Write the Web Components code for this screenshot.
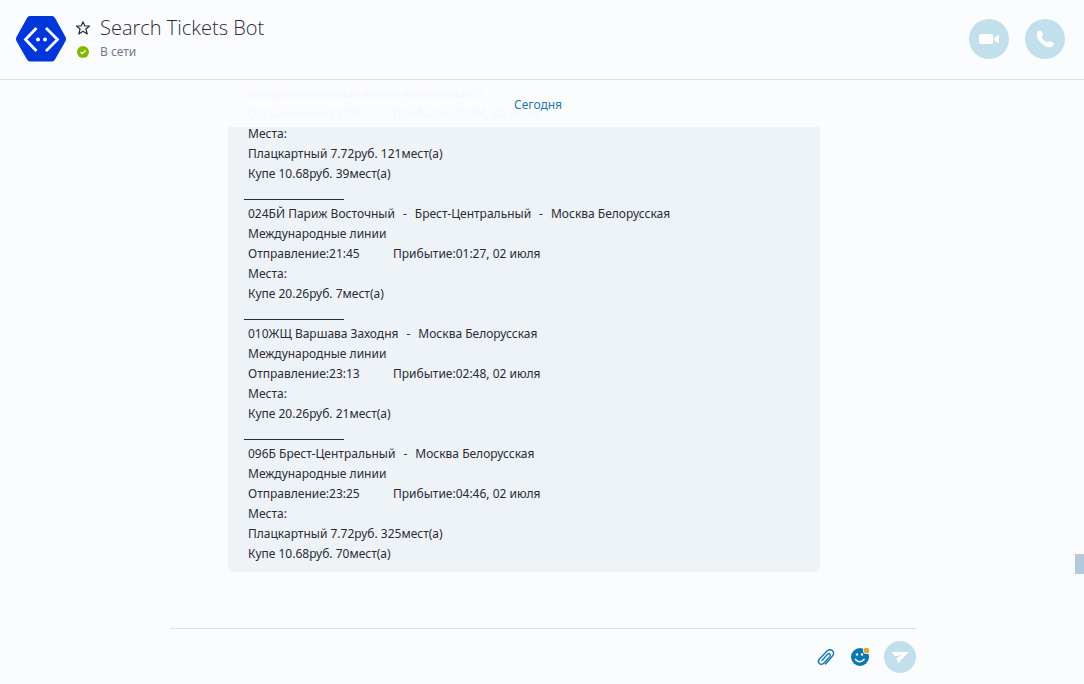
<!DOCTYPE html>
<html lang="ru">
<head>
<meta charset="utf-8">
<meta name="viewport" content="width=device-width, initial-scale=1">
<title>Search Tickets Bot</title>
<style>
  body { margin: 0; background: #fbfcfe; color: #2b2c33; font: 12px/20px "Noto Sans", "Open Sans", sans-serif; }
</style>
</head>
<body>
<chat-app></chat-app>
<script>
const define = (name, html) => {
  const template = document.createElement('template');
  template.innerHTML = html;
  customElements.define(name, class extends HTMLElement {
    constructor() {
      super();
      this.attachShadow({ mode: 'open' }).append(template.content.cloneNode(true));
    }
  });
};

class RoundButton extends HTMLElement {
  connectedCallback() {
    this.attachShadow({ mode: 'open' }).innerHTML = `
      <style>
        :host { display: block; }
        button { display: grid; place-items: center; width: var(--size, 40px); height: var(--size, 40px);
          padding: 0; border: 0; border-radius: 50%; background: var(--fill, #c2dfec); color: #fff; }
      </style>
      <button type="button" aria-label="${this.getAttribute('label')}"><slot></slot></button>`;
  }
}
customElements.define('round-button', RoundButton);

define('chat-header', `
  <style>
    :host { display: flex; align-items: flex-start; gap: 7px; height: 64px; padding: 15px 19px 0 15px;
      border-bottom: 1px solid #dfe2e6; }
    svg { display: block; }
    .info { display: grid; grid-template-columns: 18px 1fr; gap: 1px 8px; flex: 1; align-items: center; }
    .info > svg { justify-self: center; }
    h1 { margin: 0; font: 300 20px/26px "Open Sans", "Noto Sans", sans-serif; color: #2b2c33; }
    p { margin: 0; line-height: 20px; color: #737a88; }
    .calls { display: flex; gap: 16px; padding-top: 4px; }
  </style>
  <svg width="52" height="48" viewBox="0 0 52 48" aria-hidden="true">
    <path d="M15 1H37Q39 1 40 3L50 21Q52 24 50 27L40 44.500Q39 46.500 37 46.500H15Q13 46.500 12 44.500L2 27Q0 24 2 21L12 3Q13 1 15 1Z" fill="#0037da"/>
    <path d="M21.500 13L10.500 24.500L21.500 36M31 13L42.500 24.500L31 36" fill="none" stroke="#fff" stroke-width="2.800"/>
    <circle cx="23" cy="24.500" r="2" fill="#fff"/><circle cx="30" cy="24.500" r="2" fill="#fff"/>
  </svg>
  <div class="info">
    <svg width="16" height="16" viewBox="0 0 16 16" aria-hidden="true"><path d="M8 1.800L9.800 6H14.500L10.900 9L12.200 13.900L8 11.200L3.800 13.900L5.100 9L1.500 6H6.200Z" fill="none" stroke="#2b2c33" stroke-width="1.200" stroke-linejoin="round"/></svg>
    <h1>Search Tickets Bot</h1>
    <svg width="12" height="12" viewBox="0 0 12 12" aria-hidden="true"><circle cx="6" cy="6" r="6" fill="#7fba00"/><path d="M3.500 6L5.300 7.700L8.600 4.500" fill="none" stroke="#fff" stroke-width="1.300"/></svg>
    <p>В сети</p>
  </div>
  <div class="calls">
    <round-button label="Видеозвонок"><svg width="22" height="14" viewBox="0 0 22 14"><rect x="1" y="2" width="14" height="10" rx="2" fill="#fff"/><path d="M16 6L20 3Q21 3 21 4V10Q21 11 20 11L16 8Z" fill="#fff"/></svg></round-button>
    <round-button label="Звонок"><svg width="20" height="20" viewBox="0 0 20 20"><path d="M3 2Q5.500 .5 7 3Q8.500 6 6.500 8Q8 11.500 12 13.500Q14 11.500 17 13Q20 14.500 18 17Q15 19.500 10 17Q1 11.500 2 4Q2 3 3 2Z" fill="#fff"/></svg></round-button>
  </div>
`);

define('chat-message', `
  <style>
    :host { display: flow-root; padding: 0 20px 8px; border-radius: 0 0 6px 6px; background: #eef3f8; }
    slot { display: block; margin-top: -3px; }
  </style>
  <slot></slot>
`);

class TrainEntry extends HTMLElement {
  connectedCallback() {
    const attr = name => this.getAttribute(name);
    const route = attr('route') ? `<div class="route">${attr('route').split('|').map(s => `<span>${s}</span>`).join('<span>-</span>')}</div>
      <div>Международные линии</div>
      <div class="times"><span>Отправление:${attr('dep')}</span><span>Прибытие:${attr('arr')}, 02 июля</span></div>` : '';
    this.attachShadow({ mode: 'open' }).innerHTML = `
      <style>
        :host { display: block; }
        div { min-height: 20px; }
        .route { display: flex; flex-wrap: wrap; column-gap: 8px; }
        .times { display: grid; grid-template-columns: 145px 1fr; }
        :host(:not(:last-child))::after { content: ""; display: block; width: 100px; height: 15px; margin: 0 0 4px -4px; border-bottom: 1px solid #2b2c33; }
      </style>${route}<div>Места:</div>${attr('seats').split('|').map(s => `<div>${s}</div>`).join('')}`;
  }
}
customElements.define('train-entry', TrainEntry);

define('chat-log', `
  <style>
    :host { display: block; position: relative; flex: 1; }
    .thread { padding: 0 264px 0 228px; }
    .past { padding: 4px 20px 3px; color: #f6f7f9; }
    .past div { display: grid; grid-template-columns: 145px 1fr; height: 20px; white-space: nowrap; }
    .past div:first-child { display: block; }
    .day { position: absolute; top: 15px; left: 0; right: 0; padding-right: 8px; text-align: center; color: #1a7aae; }
    .thumb { position: absolute; right: 0; bottom: 54px; width: 9px; height: 20px; background: #b3cadd; }
  </style>
  <div class="thread">
    <div class="past"><div>Межрегиональные линии экономкласса</div><div><span>Отправление:21:08</span><span>Прибытие:01:04, 02 июля</span></div></div>
    <chat-message>
      <train-entry seats="Плацкартный 7.72руб. 121мест(а)|Купе 10.68руб. 39мест(а)"></train-entry>
      <train-entry route="024БЙ Париж Восточный|Брест-Центральный|Москва Белорусская" dep="21:45" arr="01:27" seats="Купе 20.26руб. 7мест(а)"></train-entry>
      <train-entry route="010ЖЩ Варшава Заходня|Москва Белорусская" dep="23:13" arr="02:48" seats="Купе 20.26руб. 21мест(а)"></train-entry>
      <train-entry route="096Б Брест-Центральный|Москва Белорусская" dep="23:25" arr="04:46" seats="Плацкартный 7.72руб. 325мест(а)|Купе 10.68руб. 70мест(а)"></train-entry>
    </chat-message>
  </div>
  <div class="day">Сегодня</div>
  <div class="thumb"></div>
`);

define('chat-composer', `
  <style>
    :host { display: flex; box-sizing: border-box; height: 56px; margin: 0 168px 0 170px; padding-top: 12px;
      border-top: 1px solid #dcdfe5; align-items: flex-start; }
    textarea { flex: 1; height: 32px; box-sizing: border-box; padding: 6px; border: 0; background: none; resize: none; font: inherit; outline: 0; }
    .tools { display: flex; gap: 8px; align-items: center; }
    .tool { --fill: transparent; --size: 26px; }
    .send { --size: 32px; margin-left: 3px; }
  </style>
  <textarea aria-label="Сообщение"></textarea>
  <div class="tools">
    <round-button class="tool" label="Прикрепить файл"><svg width="20" height="20" viewBox="0 0 20 20"><path d="M6 12.500L11.500 6.200Q13 5 14 6.200Q15 7.200 13.800 8.600L8 15Q5.500 17.500 3.300 15.500Q1.300 13.300 3.500 11L11 3Q14 .5 16.500 2.800Q18.800 5.300 16.300 8.300L9.500 16" transform="translate(0 1)" fill="none" stroke="#1079b2" stroke-width="1.400" stroke-linecap="round"/></svg></round-button>
    <round-button class="tool" label="Смайлики"><svg width="20" height="20" viewBox="0 0 20 20"><circle cx="10" cy="10" r="9" fill="#0879b1"/><circle cx="7" cy="7.500" r="1.200" fill="#fff"/><circle cx="12" cy="7.500" r="1.200" fill="#fff"/><path d="M5 12Q9.500 17.500 14.500 12" fill="none" stroke="#fff" stroke-width="1.500"/><circle cx="16.500" cy="3.500" r="3.500" fill="#fbfcfe"/><circle cx="16.500" cy="3.500" r="2.800" fill="#e3a33a"/></svg></round-button>
    <round-button class="send" label="Отправить"><svg width="20" height="18" viewBox="0 0 20 18"><path d="M2 4H18.500L8 15.500L6.500 10.500L12 6.500L4.500 8.500Z" fill="#fff"/></svg></round-button>
  </div>
`);

define('chat-app', `
  <style>
    :host { display: flex; flex-direction: column; min-height: 100vh; }
  </style>
  <chat-header></chat-header>
  <chat-log></chat-log>
  <chat-composer></chat-composer>
`);
</script>
</body>
</html>
